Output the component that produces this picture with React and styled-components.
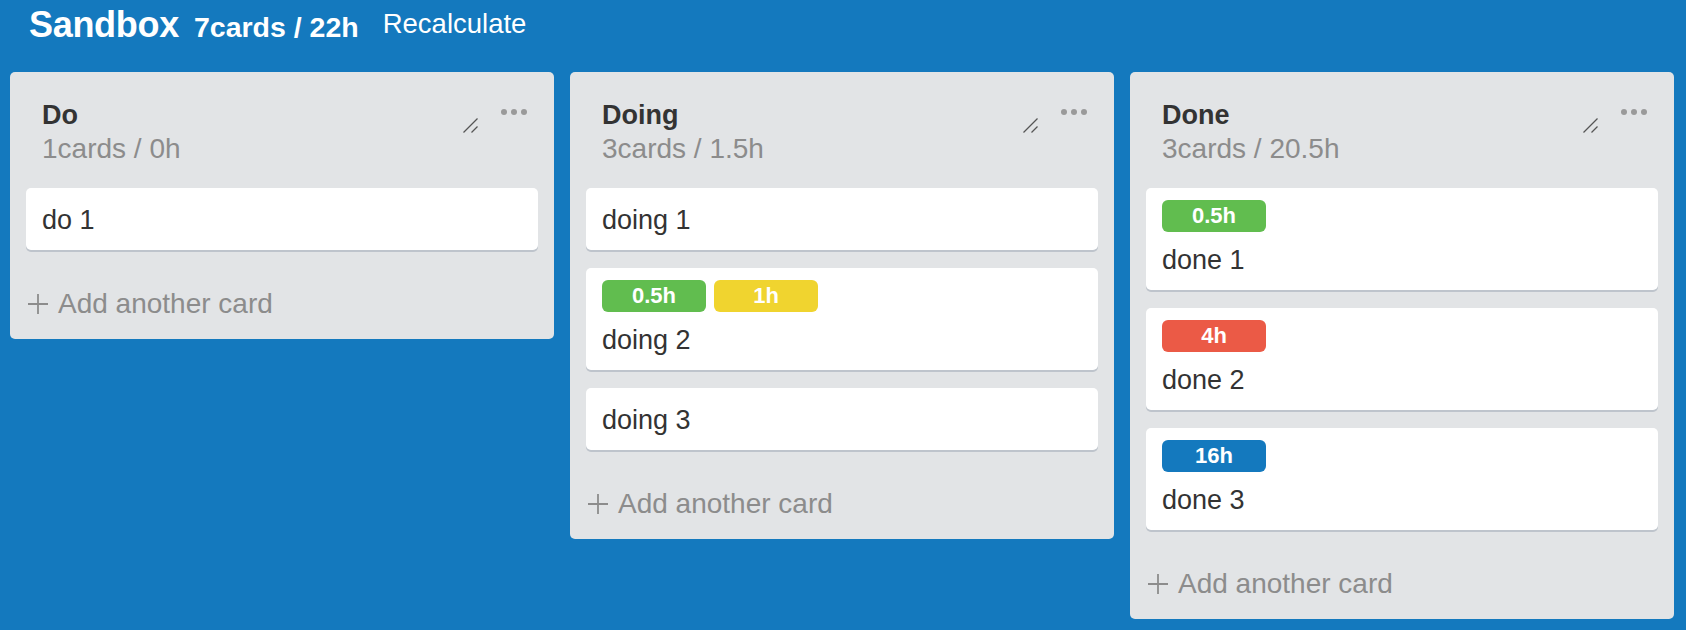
import React from 'react'
import styled, { createGlobalStyle } from 'styled-components'

const colors = {
  board: '#1479be',
  lane: '#e2e4e6',
  text: '#333',
  muted: '#8c8c8c',
  green: '#61bd4f',
  yellow: '#f0d42f',
  red: '#eb5a46',
  blue: '#1479be',
}

const GlobalStyle = createGlobalStyle`
  html, body {
    margin: 0;
    padding: 0;
  }
  body {
    background: ${colors.board};
    font-family: "Liberation Sans", Helvetica, Arial, sans-serif;
  }
`

const Page = styled.div`
  min-height: 100vh;
  background: ${colors.board};
`

const TopBar = styled.header`
  display: flex;
  align-items: baseline;
  height: 48px;
  box-sizing: border-box;
  padding: 5px 29px 0;
  color: #fff;
`

const BoardTitle = styled.h1`
  margin: 0 15px 0 0;
  font-size: 36px;
  line-height: 40px;
  font-weight: bold;
  letter-spacing: -0.3px;
`

const BoardTotals = styled.span`
  margin-right: 24px;
  font-size: 28.5px;
  line-height: 40px;
  font-weight: bold;
`

const RecalcButton = styled.button`
  align-self: flex-start;
  margin-top: 3px;
  padding: 0;
  border: 0;
  background: none;
  color: #fff;
  font-family: inherit;
  font-size: 27.5px;
  line-height: 32px;
  cursor: pointer;
`

const Lanes = styled.div`
  display: flex;
  align-items: flex-start;
  gap: 16px;
  padding: 24px 10px;
`

const Lane = styled.section`
  width: 544px;
  box-sizing: border-box;
  display: flex;
  flex-direction: column;
  padding: 26px 16px 15px;
  background: ${colors.lane};
  border-radius: 5px;
`

const LaneHeader = styled.div`
  display: flex;
  align-items: flex-start;
  padding: 0 11px 0 16px;
`

const TitleArea = styled.div`
  flex: 1;
`

const TitleRow = styled.div`
  display: flex;
  align-items: flex-end;
  justify-content: space-between;
`

const LaneTitle = styled.h2`
  margin: 0;
  font-size: 27px;
  line-height: 34px;
  font-weight: bold;
  color: ${colors.text};
`

const Grip = styled.svg`
  display: block;
  margin-bottom: -1px;
`

const LaneMeta = styled.div`
  font-size: 28px;
  line-height: 34px;
  color: ${colors.muted};
`

const MenuButton = styled.svg`
  display: block;
  margin: 11px 0 0 23px;
  cursor: pointer;
`

const CardList = styled.div`
  display: flex;
  flex-direction: column;
  gap: 18px;
  margin-top: 22px;
`

const Card = styled.article`
  padding: 12px 16px 10px;
  background: #fff;
  border-radius: 5px;
  box-shadow: 0 2px 0 rgba(9, 30, 66, 0.16);
`

const Labels = styled.div`
  display: flex;
  gap: 8px;
  margin-bottom: 8px;
`

const Label = styled.span`
  width: 104px;
  height: 32px;
  border-radius: 6px;
  background: ${(p) => p.$color};
  color: #fff;
  font-size: 22px;
  line-height: 32px;
  font-weight: bold;
  text-align: center;
`

const CardTitle = styled.div`
  font-size: 27px;
  line-height: 40px;
  color: ${colors.text};
`

const AddCard = styled.div`
  display: flex;
  align-items: center;
  gap: 10px;
  height: 40px;
  margin-top: 34px;
  padding-left: 2px;
  font-size: 28px;
  color: ${colors.muted};
  cursor: pointer;
`

const lanes = [
  {
    id: 'do',
    title: 'Do',
    cards: [{ id: 'd1', title: 'do 1', labels: [] }],
  },
  {
    id: 'doing',
    title: 'Doing',
    cards: [
      { id: 'g1', title: 'doing 1', labels: [] },
      {
        id: 'g2',
        title: 'doing 2',
        labels: [
          { hours: 0.5, color: colors.green },
          { hours: 1, color: colors.yellow },
        ],
      },
      { id: 'g3', title: 'doing 3', labels: [] },
    ],
  },
  {
    id: 'done',
    title: 'Done',
    cards: [
      { id: 'n1', title: 'done 1', labels: [{ hours: 0.5, color: colors.green }] },
      { id: 'n2', title: 'done 2', labels: [{ hours: 4, color: colors.red }] },
      { id: 'n3', title: 'done 3', labels: [{ hours: 16, color: colors.blue }] },
    ],
  },
]

const hoursOf = (cards) =>
  cards.reduce((sum, c) => sum + c.labels.reduce((s, l) => s + l.hours, 0), 0)

const ResizeGrip = () => (
  <Grip width="15" height="15" viewBox="0 0 15 15">
    <line x1="0.5" y1="14.5" x2="14.5" y2="0.5" stroke="#555" strokeWidth="1.3" />
    <line x1="8.5" y1="14.5" x2="14.5" y2="8.5" stroke="#555" strokeWidth="1.3" />
  </Grip>
)

const Dots = () => (
  <MenuButton width="26" height="6" viewBox="0 0 26 6">
    <circle cx="3" cy="3" r="3" fill="#9a9a9a" />
    <circle cx="13" cy="3" r="3" fill="#9a9a9a" />
    <circle cx="23" cy="3" r="3" fill="#9a9a9a" />
  </MenuButton>
)

const Plus = () => (
  <svg width="20" height="20" viewBox="0 0 20 20">
    <path d="M10 0v20M0 10h20" stroke={colors.muted} strokeWidth="1.8" />
  </svg>
)

const TaskCard = ({ card }) => (
  <Card>
    {card.labels.length > 0 && (
      <Labels>
        {card.labels.map((l, i) => (
          <Label key={i} $color={l.color}>{l.hours}h</Label>
        ))}
      </Labels>
    )}
    <CardTitle>{card.title}</CardTitle>
  </Card>
)

const BoardLane = ({ lane }) => (
  <Lane>
    <LaneHeader>
      <TitleArea>
        <TitleRow>
          <LaneTitle>{lane.title}</LaneTitle>
          <ResizeGrip />
        </TitleRow>
        <LaneMeta>
          {lane.cards.length}cards / {hoursOf(lane.cards)}h
        </LaneMeta>
      </TitleArea>
      <Dots />
    </LaneHeader>
    <CardList>
      {lane.cards.map((c) => (
        <TaskCard key={c.id} card={c} />
      ))}
    </CardList>
    <AddCard>
      <Plus />
      Add another card
    </AddCard>
  </Lane>
)

const App = () => {
  const allCards = lanes.flatMap((l) => l.cards)
  return (
    <Page>
      <GlobalStyle />
      <TopBar>
        <BoardTitle>Sandbox</BoardTitle>
        <BoardTotals>
          {allCards.length}cards / {hoursOf(allCards)}h
        </BoardTotals>
        <RecalcButton>Recalculate</RecalcButton>
      </TopBar>
      <Lanes>
        {lanes.map((lane) => (
          <BoardLane key={lane.id} lane={lane} />
        ))}
      </Lanes>
    </Page>
  )
}

export default App
